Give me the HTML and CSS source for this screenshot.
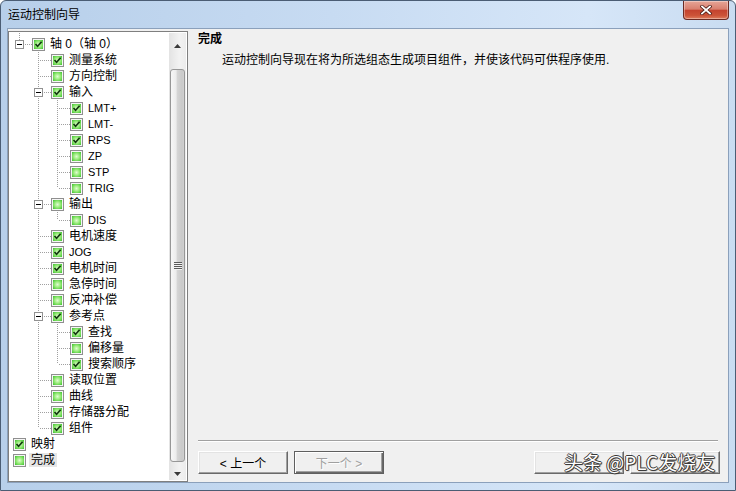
FILE: index.html
```html
<!DOCTYPE html>
<html lang="zh">
<head>
  <meta charset="UTF-8">
  <meta name="viewport" content="width=device-width, initial-scale=1.0">
  <title>运动控制向导</title>
  <link rel="stylesheet" href="styles.css">
</head>
<body>

  <div class="window">
    <div class="titlebar">
      <span class="title">运动控制向导</span>
      <div class="close-btn">
        <svg width="12" height="10" viewBox="0 0 12 10">
          <path d="M2 1.5 L10 8.5 M10 1.5 L2 8.5" stroke="#4a1a14" stroke-width="3.4" stroke-linecap="square"/>
          <path d="M2 1.5 L10 8.5 M10 1.5 L2 8.5" stroke="#fff" stroke-width="1.8" stroke-linecap="square"/>
        </svg>
      </div>
    </div>

    <div class="client">
      <div class="tree-box">
        <div class="tree">
          <div class="node"><span class="g l top"><b class="exp"></b></span><span class="cb on"></span><span class="lbl">轴 0（轴 0）</span></div>
          <div class="node"><span class="g"></span><span class="g t"></span><span class="cb on"></span><span class="lbl">测量系统</span></div>
          <div class="node"><span class="g"></span><span class="g t"></span><span class="cb"></span><span class="lbl">方向控制</span></div>
          <div class="node"><span class="g"></span><span class="g t"><b class="exp"></b></span><span class="cb on"></span><span class="lbl">输入</span></div>
          <div class="node"><span class="g"></span><span class="g v"></span><span class="g t"></span><span class="cb on"></span><span class="lbl en">LMT+</span></div>
          <div class="node"><span class="g"></span><span class="g v"></span><span class="g t"></span><span class="cb on"></span><span class="lbl en">LMT-</span></div>
          <div class="node"><span class="g"></span><span class="g v"></span><span class="g t"></span><span class="cb on"></span><span class="lbl en">RPS</span></div>
          <div class="node"><span class="g"></span><span class="g v"></span><span class="g t"></span><span class="cb"></span><span class="lbl en">ZP</span></div>
          <div class="node"><span class="g"></span><span class="g v"></span><span class="g t"></span><span class="cb"></span><span class="lbl en">STP</span></div>
          <div class="node"><span class="g"></span><span class="g v"></span><span class="g l"></span><span class="cb"></span><span class="lbl en">TRIG</span></div>
          <div class="node"><span class="g"></span><span class="g t"><b class="exp"></b></span><span class="cb"></span><span class="lbl">输出</span></div>
          <div class="node"><span class="g"></span><span class="g v"></span><span class="g l"></span><span class="cb"></span><span class="lbl en">DIS</span></div>
          <div class="node"><span class="g"></span><span class="g t"></span><span class="cb on"></span><span class="lbl">电机速度</span></div>
          <div class="node"><span class="g"></span><span class="g t"></span><span class="cb on"></span><span class="lbl en">JOG</span></div>
          <div class="node"><span class="g"></span><span class="g t"></span><span class="cb on"></span><span class="lbl">电机时间</span></div>
          <div class="node"><span class="g"></span><span class="g t"></span><span class="cb"></span><span class="lbl">急停时间</span></div>
          <div class="node"><span class="g"></span><span class="g t"></span><span class="cb"></span><span class="lbl">反冲补偿</span></div>
          <div class="node"><span class="g"></span><span class="g t"><b class="exp"></b></span><span class="cb on"></span><span class="lbl">参考点</span></div>
          <div class="node"><span class="g"></span><span class="g v"></span><span class="g t"></span><span class="cb on"></span><span class="lbl">查找</span></div>
          <div class="node"><span class="g"></span><span class="g v"></span><span class="g t"></span><span class="cb"></span><span class="lbl">偏移量</span></div>
          <div class="node"><span class="g"></span><span class="g v"></span><span class="g l"></span><span class="cb on"></span><span class="lbl">搜索顺序</span></div>
          <div class="node"><span class="g"></span><span class="g t"></span><span class="cb"></span><span class="lbl">读取位置</span></div>
          <div class="node"><span class="g"></span><span class="g t"></span><span class="cb"></span><span class="lbl">曲线</span></div>
          <div class="node"><span class="g"></span><span class="g t"></span><span class="cb on"></span><span class="lbl">存储器分配</span></div>
          <div class="node"><span class="g"></span><span class="g l"></span><span class="cb on"></span><span class="lbl">组件</span></div>
          <div class="node"><span class="cb on"></span><span class="lbl">映射</span></div>
          <div class="node"><span class="cb"></span><span class="lbl sel">完成</span></div>
        </div>

        <div class="vscroll">
          <div class="sb-arrow up">
            <svg width="7" height="4" viewBox="0 0 7 4"><path d="M0 4 L3.5 0 L7 4 Z" fill="#3a3a3a"/></svg>
          </div>
          <div class="sb-track">
            <div class="thumb"><span class="grip"></span></div>
          </div>
          <div class="sb-arrow down">
            <svg width="7" height="4" viewBox="0 0 7 4"><path d="M0 0 L7 0 L3.5 4 Z" fill="#3a3a3a"/></svg>
          </div>
        </div>
      </div>

      <div class="page">
        <div class="page-title">完成</div>
        <div class="page-desc">运动控制向导现在将为所选组态生成项目组件，并使该代码可供程序使用.</div>
        <div class="page-body"></div>
        <div class="divider"></div>
        <div class="buttons">
          <button class="btn">&lt; 上一个</button>
          <button class="btn default" disabled>下一个 &gt;</button>
          <span class="spacer"></span>
          <button class="btn"></button>
          <button class="btn"></button>
        </div>
      </div>
    </div>

    <div class="watermark">头条 @PLC发烧友</div>
  </div>

  <script>
    // tick marks for checked boxes
    document.querySelectorAll('.cb.on').forEach(function (box) {
      box.innerHTML = '<svg width="9" height="9" viewBox="0 0 9 9"><path d="M1.5 4 L3.6 6.3 L7.6 1.8" fill="none" stroke="#12380f" stroke-width="1.7"/></svg>';
    });
  </script>

</body>
</html>
```

FILE: styles.css
```css
body {
  margin: 0;
  width: 736px;
  height: 491px;
  overflow: hidden;
  font-family: "Liberation Sans", "Noto Sans CJK SC", sans-serif;
  font-size: 12px;
  color: #000;
  background: #fff;
}
.window {
  position: relative;
  box-sizing: border-box;
  width: 736px;
  height: 491px;
  display: flex;
  flex-direction: column;
  padding: 0 6px 7px;
  border: 1px solid #4b5d74;
  border-radius: 6px 6px 0 0;
  background: linear-gradient(to right, #b7cfea, #c7dbf2 45%, #d6e6f8 80%, #c9dcf1);
}
.titlebar {
  height: 27px;
  display: flex;
  align-items: flex-start;
  flex: none;
}
.title {
  padding: 7px 0 0 1px;
  line-height: 14px;
}
.close-btn {
  margin-left: auto;
  width: 46px;
  height: 19px;
  box-sizing: border-box;
  display: flex;
  align-items: center;
  justify-content: center;
  border: 1px solid #6b2b24;
  border-top: none;
  border-radius: 0 0 4px 4px;
  background: linear-gradient(#e6a597, #d9806f 45%, #c4432f 52%, #cc5338 80%, #df7d5e);
  box-shadow: inset 0 0 0 1px rgba(255, 255, 255, 0.35);
}
.close-btn svg {
  display: block;
}
.client {
  flex: 1;
  min-height: 0;
  display: flex;
  border: 1px solid #8ba0bb;
  background: #f0f0f0;
}

/* tree */
.tree-box {
  box-sizing: border-box;
  width: 180px;
  margin-top: 2px;
  display: flex;
  border: 1px solid #7f7f7f;
  padding: 1px;
  background: #fff;
}
.tree {
  flex: 1;
  min-width: 0;
  padding-top: 3px;
  overflow: hidden;
}
.node {
  display: flex;
  align-items: center;
  height: 16px;
  white-space: nowrap;
}
.g {
  position: relative;
  flex: none;
  width: 19px;
  height: 16px;
}
.g.v::before, .g.t::before, .g.l::before {
  content: "";
  position: absolute;
  left: 9px;
  top: 0;
  width: 1px;
  height: 16px;
  background: repeating-linear-gradient(to bottom, #a0a0a0 0 1px, transparent 1px 2px);
}
.g.l::before {
  height: 8px;
}
.g.top::before {
  top: -3px;
  height: 11px;
}
.g.t::after, .g.l::after {
  content: "";
  position: absolute;
  left: 10px;
  top: 8px;
  width: 12px;
  height: 1px;
  background: repeating-linear-gradient(to right, transparent 0 1px, #a0a0a0 1px 2px);
}
.exp {
  position: absolute;
  z-index: 1;
  left: 5px;
  top: 4px;
  width: 9px;
  height: 9px;
  box-sizing: border-box;
  border: 1px solid #919191;
  background: #fff;
}
.exp::before {
  content: "";
  position: absolute;
  left: 1px;
  top: 3px;
  width: 5px;
  height: 1px;
  background: #000;
}
.cb {
  flex: none;
  box-sizing: border-box;
  width: 13px;
  height: 13px;
  margin: 0 3px;
  padding: 1px;
  border: 1px solid #8f8f8f;
  background: radial-gradient(circle, #e0fcd2 0, #9aec7c 45%, #3cbf2c 100%) content-box, #f6f6f6;
}
.cb svg {
  display: block;
}
.lbl {
  padding: 0 2px;
  line-height: 14px;
}
.lbl.en {
  font-size: 11px;
}
.lbl.sel {
  background: #e6e6e6;
}

/* scrollbar */
.vscroll {
  flex: none;
  width: 17px;
  display: flex;
  flex-direction: column;
  background: linear-gradient(to right, #e3e3e3, #f2f2f2 60%, #ececec);
}
.sb-arrow {
  display: flex;
  justify-content: center;
  box-sizing: border-box;
  flex: none;
}
.sb-arrow svg {
  display: block;
}
.sb-arrow.up {
  height: 18px;
  padding-top: 11px;
}
.sb-arrow.down {
  height: 17px;
  padding-top: 9px;
}
.sb-track {
  flex: 1;
  display: flex;
  padding: 18px 1px 1px;
}
.thumb {
  flex: 1;
  display: flex;
  align-items: center;
  justify-content: center;
  border: 1px solid #979797;
  border-radius: 3px;
  background: linear-gradient(to right, #f7f7f7 0, #ececec 40%, #d6d6d6 46%, #c9c9c9 85%, #d2d2d2);
}
.grip {
  width: 8px;
  height: 8px;
  background: repeating-linear-gradient(to bottom, #5a5a5a 0 1px, #f2f2f2 1px 2px);
}

/* wizard page */
.page {
  flex: 1;
  min-width: 0;
  display: flex;
  flex-direction: column;
  padding: 3px 8px 8px 10px;
}
.page-title {
  font-weight: bold;
  line-height: 14px;
}
.page-desc {
  margin-top: 7px;
  padding-left: 24px;
  line-height: 14px;
}
.page-body {
  flex: 1;
}
.divider {
  margin-right: 2px;
  border-top: 1px solid #a0a0a0;
  border-bottom: 1px solid #fff;
}
.buttons {
  display: flex;
  gap: 6px;
  margin-top: 9px;
}
.spacer {
  flex: 1;
}
.btn {
  width: 90px;
  height: 23px;
  padding: 0;
  font: 12px "Liberation Sans", "Noto Sans CJK SC", sans-serif;
  color: #000;
  background: #f0f0f0;
  border: 1px solid;
  border-color: #fff #696969 #696969 #fff;
  box-shadow: inset -1px -1px 0 #a0a0a0, inset 1px 1px 0 #e3e3e3;
}
.btn.default {
  border-color: #5f5f5f;
  box-shadow: inset 1px 1px 0 #fff, inset -1px -1px 0 #696969, inset -2px -2px 0 #a0a0a0;
}
.btn:disabled {
  color: #a0a0a0;
  text-shadow: 1px 1px 0 #fff;
}

.watermark {
  position: absolute;
  left: 563px;
  top: 450px;
  font-family: "Noto Sans CJK SC", sans-serif;
  font-size: 19px;
  line-height: 22px;
  color: #fff;
  text-shadow: 1px 0 0 #3a3a3a, -1px 0 0 #3a3a3a, 0 1px 0 #3a3a3a, 0 -1px 0 #3a3a3a, 1px 1px 1px #3a3a3a;
}
```
